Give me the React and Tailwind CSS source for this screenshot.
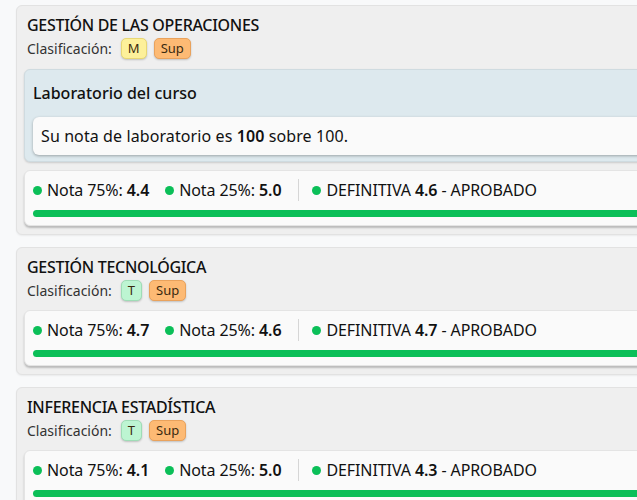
const courses = [
  {
    name: "GESTIÓN DE LAS OPERACIONES",
    tags: [
      { label: "M", cls: "bg-[#fdf09a] border-[#e8d774]" },
      { label: "Sup", cls: "bg-[#fdba74] border-[#e9a25c]" },
    ],
    lab: 100,
    n75: "4.4",
    n25: "5.0",
    def: "4.6",
  },
  {
    name: "GESTIÓN TECNOLÓGICA",
    tags: [
      { label: "T", cls: "bg-[#bdf5d2] border-[#9fdcb6]" },
      { label: "Sup", cls: "bg-[#fdba74] border-[#e9a25c]" },
    ],
    n75: "4.7",
    n25: "4.6",
    def: "4.7",
  },
  {
    name: "INFERENCIA ESTADÍSTICA",
    tags: [
      { label: "T", cls: "bg-[#bdf5d2] border-[#9fdcb6]" },
      { label: "Sup", cls: "bg-[#fdba74] border-[#e9a25c]" },
    ],
    n75: "4.1",
    n25: "5.0",
    def: "4.3",
  },
];

function Dot() {
  return <span className="inline-block w-[9px] h-[9px] rounded-full bg-[#0bbf58] mr-[5px]" />;
}

function Grades({ c }) {
  return (
    <div className="rounded-md border border-[#e4e4e4] bg-[#fafafa] px-2 pt-2 pb-[8px] shadow-[0_2px_2px_rgba(0,0,0,0.22)]">
      <div className="flex items-center h-[22px] text-[16px] leading-[22px] tracking-[-0.1px] text-[#111]">
        <span className="flex items-center">
          <Dot />
          Nota 75%:&nbsp;<b className="font-semibold">{c.n75}</b>
        </span>
        <span className="flex items-center ml-4">
          <Dot />
          Nota 25%:&nbsp;<b className="font-semibold">{c.n25}</b>
        </span>
        <span className="w-px h-[22px] bg-[#d6d6d6] ml-[17px] mr-[13px]" />
        <span className="flex items-center">
          <Dot />
          DEFINITIVA&nbsp;<b className="font-semibold">{c.def}</b>&nbsp;- APROBADO
        </span>
      </div>
      <div className="mt-[9px] h-[7px] rounded-full bg-[#0bbf58]" />
    </div>
  );
}

export default function App() {
  return (
    <div
      className="min-h-screen w-[637px] overflow-hidden bg-[#f8f9fa] pl-4 pt-[5px]"
      style={{ fontFamily: '"Noto Sans", "Open Sans", sans-serif' }}
    >
      {courses.map((c) => (
        <div
          key={c.name}
          className="w-[720px] mb-[12px] rounded-md border border-[#e2e2e2] bg-[#efefef] px-[7px] pt-2 pb-2 shadow-[0_1px_2px_rgba(0,0,0,0.06)]"
        >
          <div className="px-[3px]">
            <h2 className="text-[16px] leading-[22px] font-medium tracking-[-0.3px] text-[#111]">{c.name}</h2>
            <div className="flex items-center mt-[2px] text-[14px] text-[#333]">
              <span className="mr-[9px]">Clasificación:</span>
              {c.tags.map((t) => (
                <span
                  key={t.label}
                  className={`mr-[7px] h-[21px] px-[6px] flex items-center rounded-[5px] border text-[13px] text-[#3a2a10] shadow-[0_1px_2px_rgba(0,0,0,0.2)] ${t.cls}`}
                >
                  {t.label}
                </span>
              ))}
            </div>
          </div>

          {c.lab && (
            <div className="mt-[10px] rounded-md border border-[#cfdbe0] bg-[#dde9ee] px-2 pt-3 pb-[6px] shadow-[0_1px_2px_rgba(0,0,0,0.15)]">
              <h3 className="text-[16px] leading-[22px] font-medium text-[#111]">Laboratorio del curso</h3>
              <div className="mt-[13px] rounded-md bg-[#fafafa] px-2 py-2 text-[16px] leading-[22px] tracking-[0.1px] text-[#111] shadow-[0_1px_3px_rgba(0,0,0,0.3)]">
                Su nota de laboratorio es <b className="font-semibold">{c.lab}</b> sobre 100.
              </div>
            </div>
          )}

          <div className={c.lab ? "mt-2" : "mt-[9px]"}>
            <Grades c={c} />
          </div>
        </div>
      ))}
    </div>
  );
}
